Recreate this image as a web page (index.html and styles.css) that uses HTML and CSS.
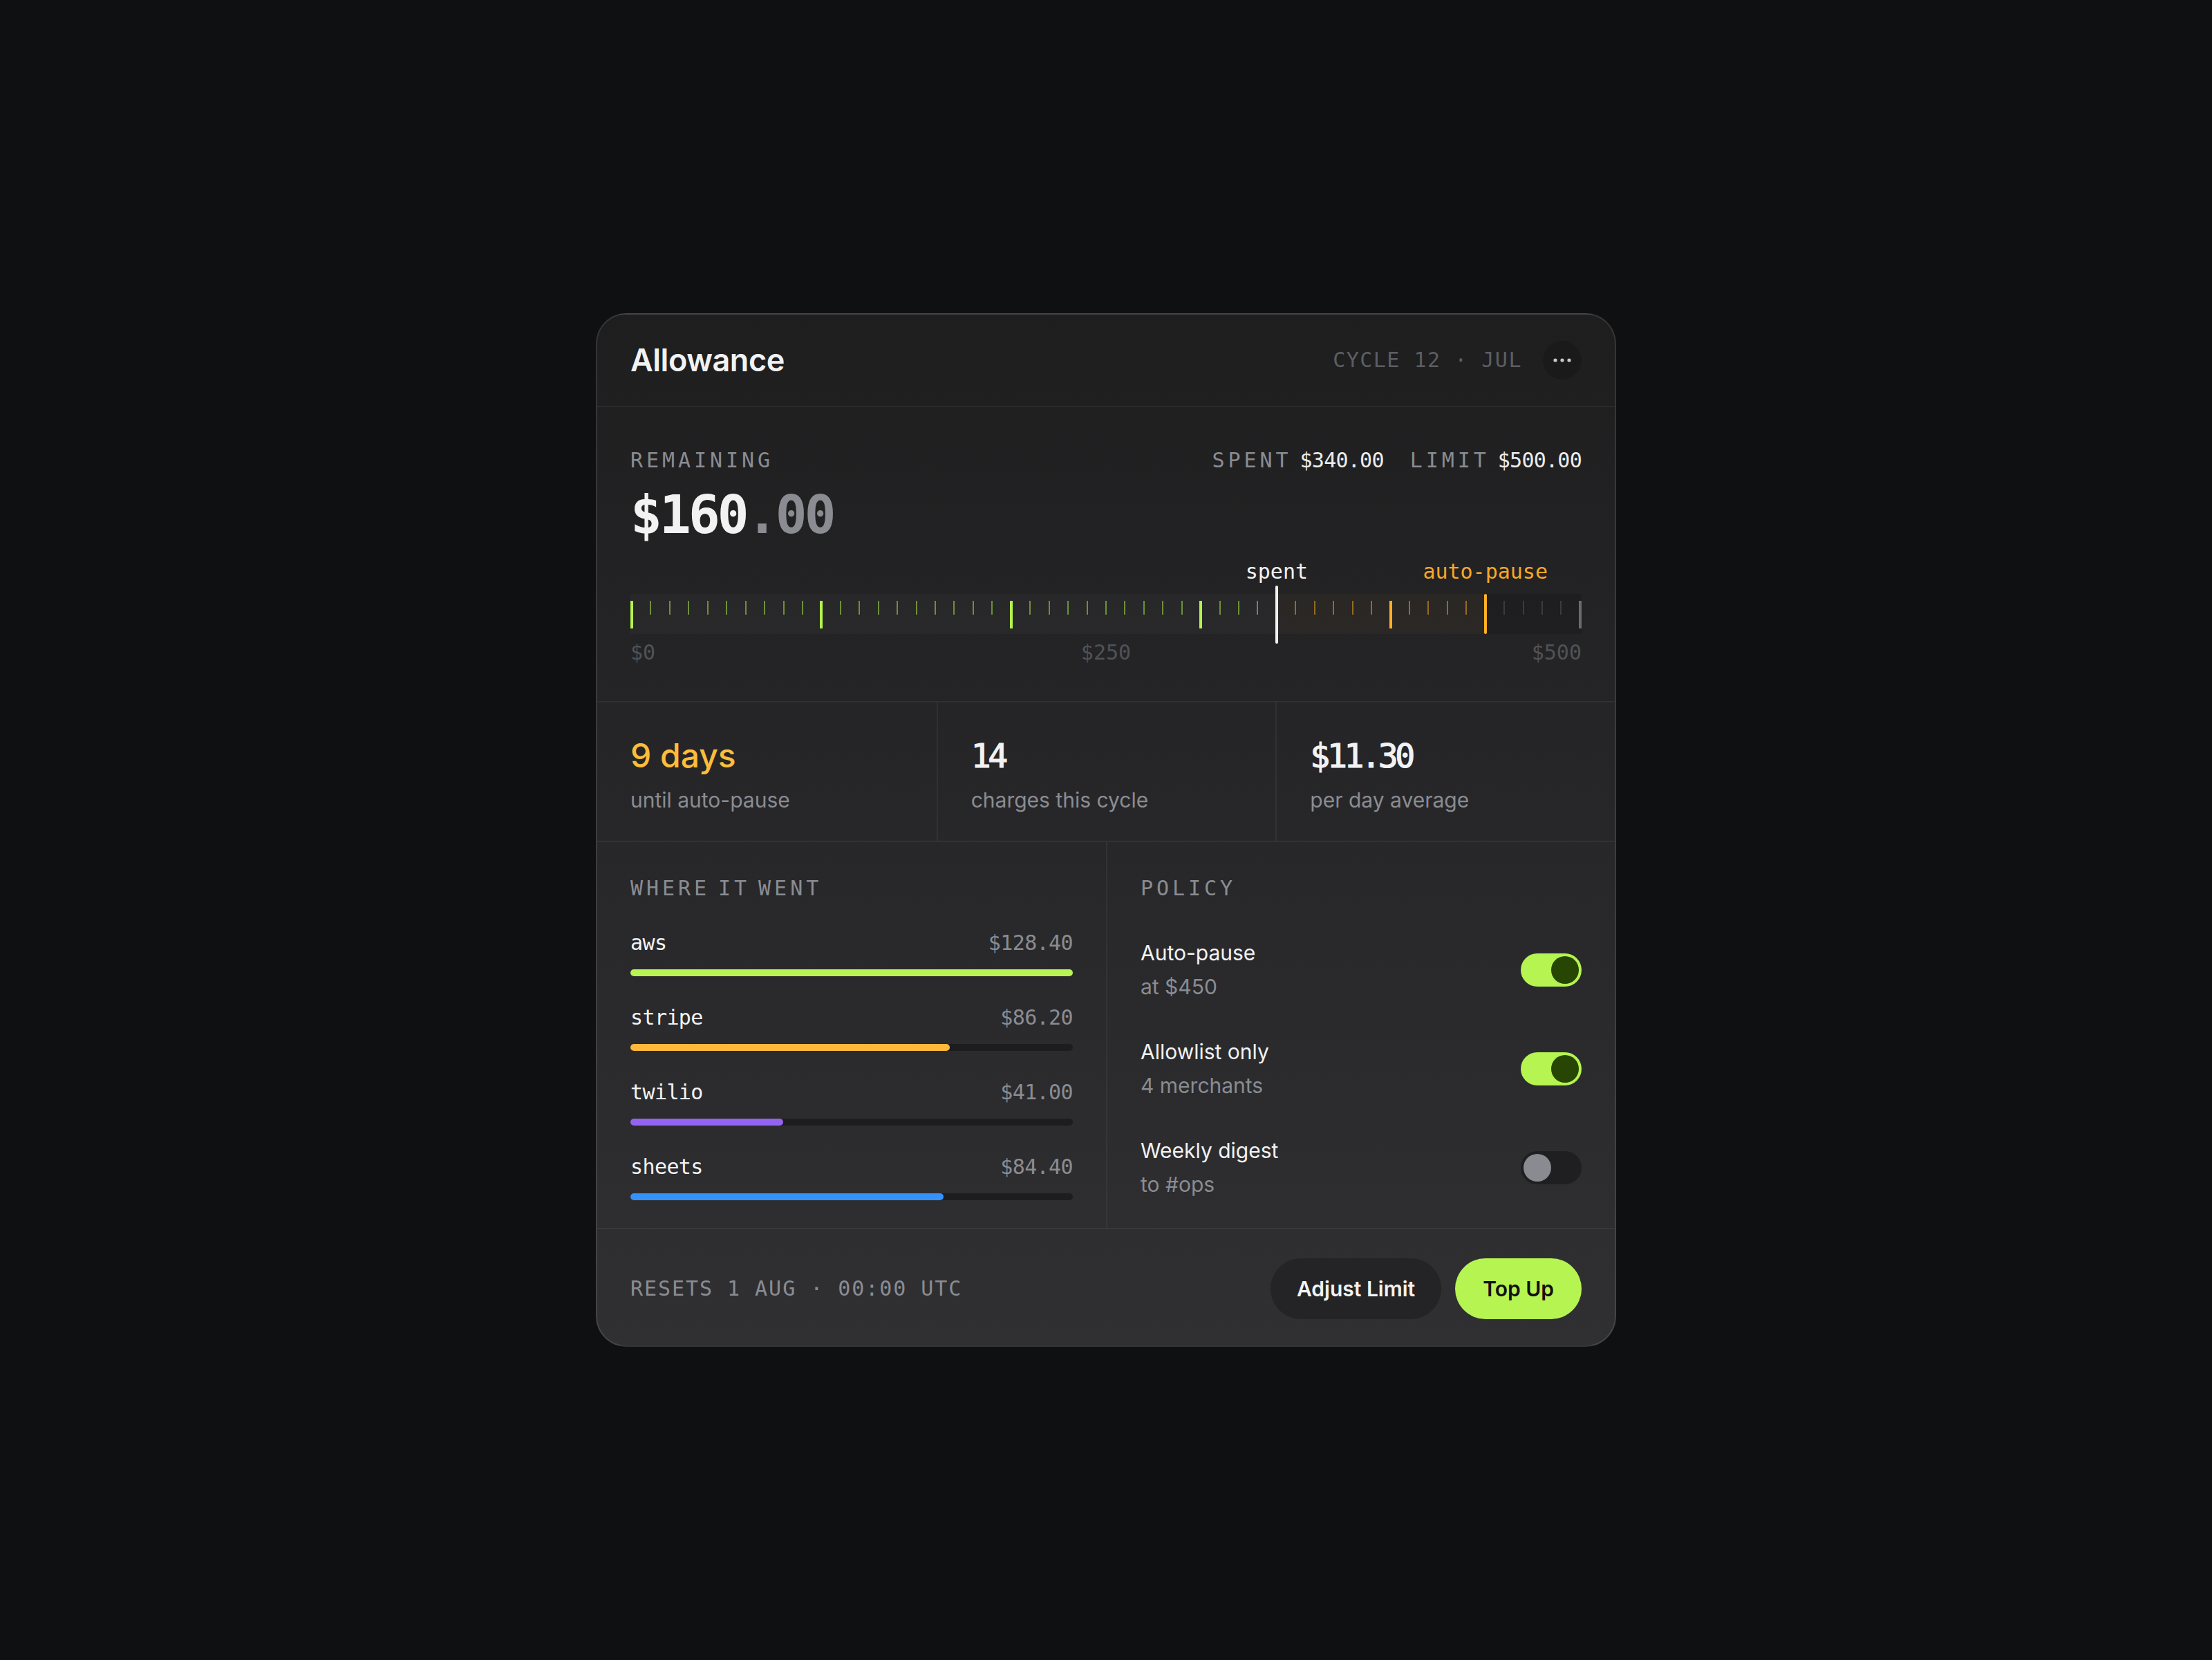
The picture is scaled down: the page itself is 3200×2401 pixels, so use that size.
FILE: index.html
```html
<!DOCTYPE html>
<html lang="en">
<head>
  <meta charset="UTF-8">
  <title>Allowance</title>
  <link rel="stylesheet" href="styles.css">
</head>
<body>
  <div class="card">
    <div class="head">
      <h1>Allowance</h1>
      <div class="head-right">
        <span class="cycle">CYCLE 12 · JUL</span>
        <button class="more" aria-label="More">
          <svg width="26" height="6" viewBox="0 0 26 6"><circle cx="3" cy="3" r="2.6"/><circle cx="13" cy="3" r="2.6"/><circle cx="23" cy="3" r="2.6"/></svg>
        </button>
      </div>
    </div>

    <div class="gauge">
      <div class="gauge-top">
        <div>
          <div class="label">REMAINING</div>
          <div class="big">$160<span class="cents">.00</span></div>
        </div>
        <div class="totals">
          <span class="label">SPENT</span><span class="val">$340.00</span>
          <span class="label">LIMIT</span><span class="val">$500.00</span>
        </div>
      </div>

      <div class="track">
        <i class="t g mj"></i><i class="t g"></i><i class="t g"></i><i class="t g"></i><i class="t g"></i>
        <i class="t g"></i><i class="t g"></i><i class="t g"></i><i class="t g"></i><i class="t g"></i>
        <i class="t g mj"></i><i class="t g"></i><i class="t g"></i><i class="t g"></i><i class="t g"></i>
        <i class="t g"></i><i class="t g"></i><i class="t g"></i><i class="t g"></i><i class="t g"></i>
        <i class="t g mj"></i><i class="t g"></i><i class="t g"></i><i class="t g"></i><i class="t g"></i>
        <i class="t g"></i><i class="t g"></i><i class="t g"></i><i class="t g"></i><i class="t g"></i>
        <i class="t g mj"></i><i class="t g"></i><i class="t g"></i><i class="t g"></i>
        <i class="t spent"><span class="mark-label">spent</span></i>
        <i class="t o"></i><i class="t o"></i><i class="t o"></i><i class="t o"></i><i class="t o"></i>
        <i class="t o mj"></i><i class="t o"></i><i class="t o"></i><i class="t o"></i><i class="t o"></i>
        <i class="t pause"><span class="mark-label">auto-pause</span></i>
        <i class="t n"></i><i class="t n"></i><i class="t n"></i><i class="t n"></i>
        <i class="t n mj"></i>
      </div>
      <div class="scale-labels">
        <span>$0</span><span>$250</span><span>$500</span>
      </div>
    </div>

    <div class="stats">
      <div class="stat">
        <div class="stat-v warn">9 days</div>
        <div class="stat-s">until auto-pause</div>
      </div>
      <div class="stat">
        <div class="stat-v mono">14</div>
        <div class="stat-s">charges this cycle</div>
      </div>
      <div class="stat">
        <div class="stat-v mono">$11.30</div>
        <div class="stat-s">per day average</div>
      </div>
    </div>

    <div class="cols">
      <div class="col">
        <div class="label">WHERE IT WENT</div>
        <div class="spend-list">
          <div class="spend">
            <div class="spend-head"><span class="spend-name">aws</span><span class="spend-amt">$128.40</span></div>
            <div class="bar"><div class="bar-fill lime" style="width: 100%"></div></div>
          </div>
          <div class="spend">
            <div class="spend-head"><span class="spend-name">stripe</span><span class="spend-amt">$86.20</span></div>
            <div class="bar"><div class="bar-fill amber" style="width: 72.2%"></div></div>
          </div>
          <div class="spend">
            <div class="spend-head"><span class="spend-name">twilio</span><span class="spend-amt">$41.00</span></div>
            <div class="bar"><div class="bar-fill violet" style="width: 34.5%"></div></div>
          </div>
          <div class="spend">
            <div class="spend-head"><span class="spend-name">sheets</span><span class="spend-amt">$84.40</span></div>
            <div class="bar"><div class="bar-fill blue" style="width: 70.8%"></div></div>
          </div>
        </div>
      </div>

      <div class="col">
        <div class="label">POLICY</div>
        <div class="policy-list">
          <div class="policy">
            <div>
              <div class="policy-name">Auto-pause</div>
              <div class="policy-sub">at $450</div>
            </div>
            <span class="toggle on"></span>
          </div>
          <div class="policy">
            <div>
              <div class="policy-name">Allowlist only</div>
              <div class="policy-sub">4 merchants</div>
            </div>
            <span class="toggle on"></span>
          </div>
          <div class="policy">
            <div>
              <div class="policy-name">Weekly digest</div>
              <div class="policy-sub">to #ops</div>
            </div>
            <span class="toggle"></span>
          </div>
        </div>
      </div>
    </div>

    <div class="foot">
      <span class="resets">RESETS 1 AUG · 00:00 UTC</span>
      <div class="actions">
        <button class="btn btn-dark">Adjust Limit</button>
        <button class="btn btn-lime">Top Up</button>
      </div>
    </div>
  </div>
</body>
</html>
```

FILE: styles.css
```css
* { box-sizing: border-box; margin: 0; padding: 0; }
body { background: #0f1012; min-height: 100vh; display: flex; align-items: center; justify-content: center; font-family: Inter, "Noto Sans", sans-serif; color: #f2f2f3; }

.card { width: 1476px; border: 2px solid rgba(255,255,255,.1); border-radius: 44px; background: linear-gradient(180deg, #1e1e1f 0%, #303033 100%); overflow: hidden; }
.mono, .label, .cycle, .big, .val, .scale-labels, .mark-label, .spend-head, .resets { font-family: "DejaVu Sans Mono", "Liberation Mono", monospace; }

/* header */
.head { display: flex; align-items: center; justify-content: space-between; padding: 38px 48px; border-bottom: 2px solid rgba(255,255,255,.05); }
.head h1 { font-size: 45px; line-height: 56px; font-weight: 600; letter-spacing: -0.01em; }
.head-right { display: flex; align-items: center; gap: 30px; }
.cycle { font-size: 30px; line-height: 34px; letter-spacing: .05em; color: #5c5e63; }
.more { width: 56px; height: 56px; border: 0; border-radius: 50%; background: #1a1a1b; display: flex; align-items: center; justify-content: center; }
.more svg { fill: #c9c9cc; }

.label { font-size: 30px; line-height: 34px; letter-spacing: .165em; word-spacing: -11px; color: #8a8c92; }

/* gauge */
.gauge { padding: 60px 48px 53px; border-bottom: 2px solid rgba(255,255,255,.05); }
.gauge-top { display: flex; justify-content: space-between; align-items: flex-start; }
.big { margin-top: 24px; font-size: 76px; line-height: 76px; font-weight: 700; letter-spacing: -0.05em; }
.cents { color: #8a8c92; }
.totals { display: flex; align-items: baseline; }
.totals .val { margin-left: 12px; font-size: 30px; line-height: 34px; letter-spacing: -0.025em; color: #ececee; }
.totals .val + .label { margin-left: 38px; }

.track { position: relative; height: 58px; margin-top: 76px; padding-top: 10px; display: flex; justify-content: space-between; align-items: flex-start;
  background: linear-gradient(90deg, rgba(255,255,255,.025) 0 68%, rgba(255,170,40,.03) 68% 90%, rgba(0,0,0,.14) 90% 100%); }
.t { position: relative; width: 4px; height: 20px; display: flex; justify-content: center; }
.t::before { content: ""; width: 2px; height: 100%; background: currentColor; }
.t.mj { height: 40px; }
.t.mj::before { width: 4px; }
.g { color: rgba(181,243,80,.5); }
.g.mj { color: #b5f34f; }
.o { color: rgba(255,176,36,.5); }
.o.mj { color: #ffb024; }
.n { color: rgba(255,255,255,.13); }
.n.mj { color: #6a6b70; }
.t.spent { height: 84px; margin-top: -22px; color: #f2f2f3; }
.t.pause { height: 58px; margin-top: -10px; color: #ffb024; }
.t.spent::before, .t.pause::before { width: 4px; border-radius: 2px; }
.mark-label { position: absolute; left: 50%; transform: translateX(-50%); bottom: calc(100% + 3px); font-size: 30px; line-height: 34px; white-space: nowrap; font-style: normal; }
.spent .mark-label { color: #f2f2f3; }
.pause .mark-label { bottom: calc(100% + 15px); color: #f8a825; }

.scale-labels { display: grid; grid-template-columns: 1fr 1fr 1fr; margin-top: 10px; font-size: 30px; line-height: 34px; color: #505257; }
.scale-labels span:nth-child(2) { text-align: center; }
.scale-labels span:nth-child(3) { text-align: right; }

/* stats */
.stats { display: grid; grid-template-columns: repeat(3, 1fr); border-bottom: 2px solid rgba(255,255,255,.05); }
.stat { padding: 48px 48px 38px; }
.stat + .stat { border-left: 2px solid rgba(255,255,255,.05); }
.stat-v { font-size: 48px; line-height: 58px; font-weight: 500; }
.stat-v.mono { font-weight: 400; letter-spacing: -0.09em; -webkit-text-stroke: 1.2px currentColor; }
.stat-v.warn { color: #fbbd3b; }
.stat-s { margin-top: 14px; font-size: 30px; line-height: 42px; color: #8a8c92; }

/* columns */
.cols { display: grid; grid-template-columns: 1fr 1fr; border-bottom: 2px solid rgba(255,255,255,.05); }
.col { padding: 50px 48px 40px; }
.col + .col { border-left: 2px solid rgba(255,255,255,.05); }
.spend-list { margin-top: 42px; display: flex; flex-direction: column; gap: 40px; }
.spend-head { display: flex; justify-content: space-between; font-size: 30px; line-height: 40px; letter-spacing: -0.02em; }
.spend-amt { color: #8a8c92; }
.bar { margin-top: 18px; height: 10px; border-radius: 5px; background: #1d1d1f; }
.bar-fill { height: 100%; border-radius: 5px; }
.lime { background: #b8f452; }
.amber { background: #ffb83a; }
.violet { background: #9563f2; }
.blue { background: #3592fa; }

.policy-list { margin-top: 53px; display: flex; flex-direction: column; gap: 48px; }
.policy { display: flex; align-items: center; justify-content: space-between; }
.policy-name { font-size: 30px; line-height: 46px; }
.policy-sub { margin-top: 3px; font-size: 30px; line-height: 46px; color: #8a8c92; }
.toggle { width: 88px; height: 48px; padding: 4px; border-radius: 24px; background: #1f1f21; display: flex; }
.toggle::after { content: ""; width: 40px; height: 40px; border-radius: 50%; background: #8a8a91; }
.toggle.on { background: #b5f451; justify-content: flex-end; }
.toggle.on::after { background: #274604; }

/* footer */
.foot { display: flex; align-items: center; justify-content: space-between; padding: 42px 48px 38px; }
.resets { font-size: 30px; line-height: 34px; letter-spacing: .065em; color: #8a8c92; }
.actions { display: flex; gap: 20px; }
.btn { height: 88px; padding: 0 38px; border: 0; border-radius: 44px; font-family: Inter, sans-serif; font-size: 30px; font-weight: 600; }
.btn-dark { background: #242426; color: #f2f2f3; }
.btn-lime { padding: 0 40px; background: #b6f452; color: #111; }
```
